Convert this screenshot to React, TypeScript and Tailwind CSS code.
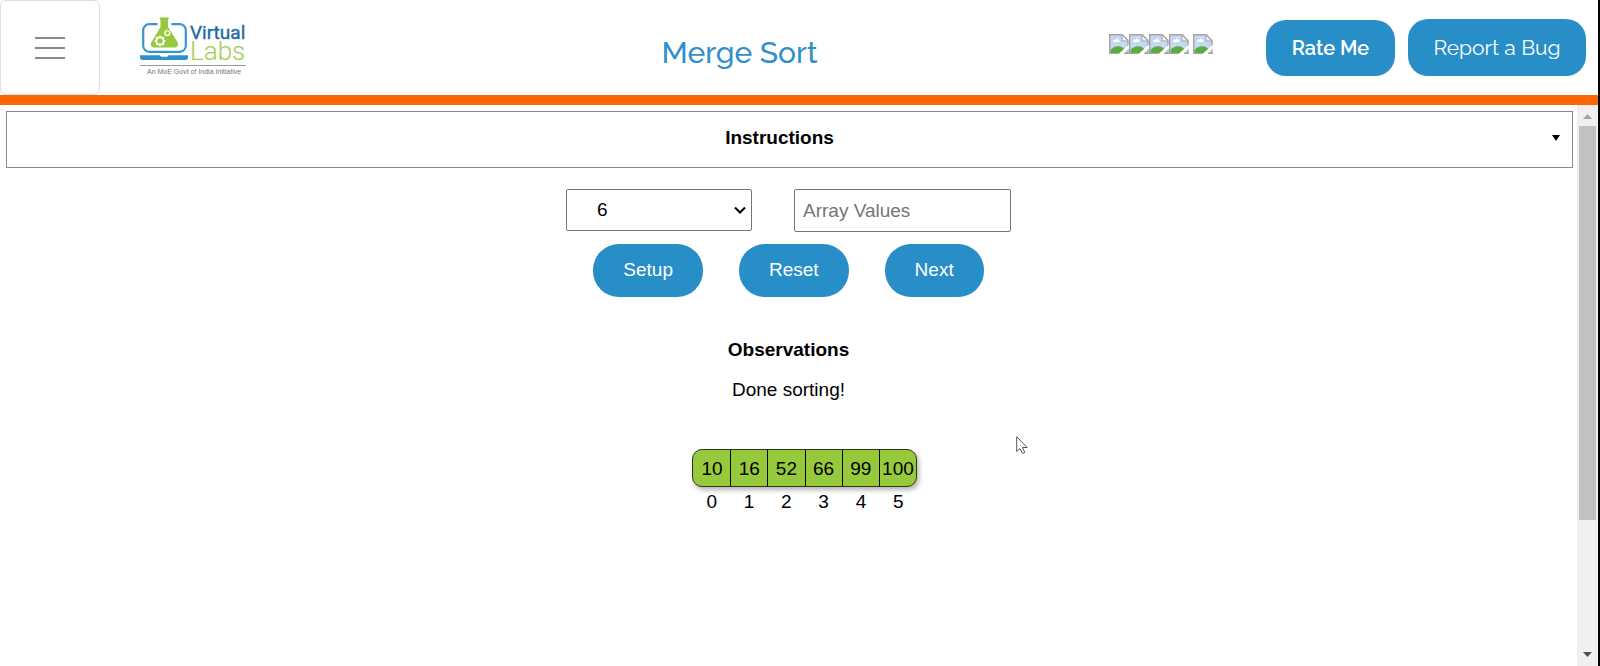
import React, { useState } from "react";

const values = [10, 16, 52, 66, 99, 100];
const sizes = [4, 5, 6, 7, 8];
const stars = [1, 2, 3, 4, 5];
const teeth = [0, 45, 90, 135, 180, 225, 270, 315];

function Gear({ x, y, r }: { x: number; y: number; r: number }) {
  return (
    <g transform={`translate(${x} ${y})`} stroke="#fff" fill="none">
      <circle r={r} strokeWidth={r * 0.5} />
      {teeth.map((a) => (
        <path key={a} d={`M0 ${-r * 1.1}V${-r * 1.5}`} strokeWidth={r * 0.4} transform={`rotate(${a})`} />
      ))}
    </g>
  );
}

function Logo() {
  return (
    <svg viewBox="0 0 108 60" className="h-[60px] w-[108px]" role="img" aria-label="Virtual Labs">
      <rect x="3.2" y="7.2" width="42.6" height="27.6" rx="6" fill="none" stroke="#3797cb" strokeWidth="2.2" />
      <path d="M17.500 4h14v8h-14z" fill="#fff" />
      <path
        d="M19.800 .5H28.700V2.500H28V10L37.500 25C39 28 37.500 30.500 34.500 30.500H14.500C11.500 30.500 10 28 11.500 25L20.500 10V2.500H19.800z"
        fill="#97c93d"
      />
      <Gear x={20} y={24} r={3.7} />
      <Gear x={27.3} y={16} r={2.3} />
      <path d="M0 38.200h20l1 1.600h6.500l1-1.600h19.500v2.300c0 1.600-1 2.500-2.500 2.500h-43c-1.500 0-2.500-.9-2.500-2.500z" fill="#3090cb" />
      <text x="50" y="22" fontSize="19" fill="#1f6ba3" stroke="#1f6ba3" strokeWidth="0.4" className="font-['Roboto',sans-serif]">
        Virtual
      </text>
      <text x="50" y="43" fontSize="26" fontWeight="300" fill="#a2cf52" className="font-['Roboto',sans-serif]">
        Labs
      </text>
      <path d="M0 48.500h106" stroke="#9a9a9a" />
      <text x="7" y="57" fontSize="7" fill="#777" className="font-['Liberation_Sans',sans-serif]">
        An MoE Govt of India Initiative
      </text>
    </svg>
  );
}

function MissingImage() {
  return (
    <svg viewBox="0 0 20 20" className="block size-5" aria-hidden="true">
      <path d="M1 1h12l6 6v12.500h-18z" fill="#c6d8f5" />
      <path d="M4 7.500c0-1.500 1.500-2 2.200-1.400C7 4 9.500 4.500 9.700 6.300c1.300 0 1.300 1.700 0 1.700h-4.700c-.6 0-1-.2-1-.5z" fill="#fff" />
      <path d="M1.500 19v-3c2-2.500 4.500-3.700 7.500-3.700 4 0 7 2.700 8.500 6.700z" fill="#5aac3c" />
      <path d="M.7 20V.700H13.200L19 6.500V20M0 19.400h20" fill="none" stroke="#a3a3a3" strokeWidth="1.400" />
      <path d="M13 1v6h6z" fill="#f4f4f4" stroke="#a3a3a3" />
      <path d="M9.500 20 20 10.500v4l-5.500 5.500z" fill="#fff" />
    </svg>
  );
}

function ActionButton({ label, onClick }: { label: string; onClick?: () => void }) {
  return (
    <button type="button" onClick={onClick} className="h-[53px] rounded-[26px] bg-[#288ec8] px-[30px] pb-0.5 text-[19px] text-white">
      {label}
    </button>
  );
}

export default function App() {
  const [size, setSize] = useState("6");
  const [text, setText] = useState("");

  return (
    <div className="flex min-h-screen flex-col border-r-2 border-black bg-white font-['Liberation_Sans',Arial,sans-serif] text-[19px] leading-6 text-black">
      <header className="flex h-[105px] items-start border-b-10 border-[#ff6600] font-['Raleway','Lato',sans-serif]">
        <button
          type="button"
          aria-label="Menu"
          className="flex h-[95px] w-[100px] flex-col items-center justify-center gap-2 rounded-md border border-[#dfdfdf]"
        >
          <span className="h-0.5 w-[30px] bg-[#888]" />
          <span className="h-0.5 w-[30px] bg-[#888]" />
          <span className="h-0.5 w-[30px] bg-[#888]" />
        </button>
        <a href="#home" className="mt-[17px] ml-10">
          <Logo />
        </a>
        <h1 className="mt-[33px] flex-1 pl-[122px] text-center text-[30px] leading-10 font-medium text-[#3090c7]">Merge Sort</h1>
        <div className="mt-[34px] flex" role="img" aria-label="Rating">
          {stars.map((s) => (
            <span key={s} className="last:ml-1">
              <MissingImage />
            </span>
          ))}
        </div>
        <button type="button" className="mt-5 ml-[53px] h-14 w-[129px] rounded-[20px] bg-[#288ec8] text-[20px] font-semibold text-white">
          Rate Me
        </button>
        <button type="button" className="mt-[19px] mr-3 ml-[13px] h-[57px] w-[178px] rounded-[20px] bg-[#288ec8] text-[21px] text-white">
          Report a Bug
        </button>
      </header>

      <div className="flex flex-1">
        <main className="flex flex-1 flex-col items-center">
          <button
            type="button"
            className="mt-1.5 mr-1 ml-1.5 flex h-[57px] items-center self-stretch border border-[#8a8a8a] pr-3 pb-[3px] font-bold"
          >
            <span className="flex-1">Instructions</span>
            <svg viewBox="0 0 8 6" className="h-1.5 w-2" aria-hidden="true">
              <path d="M0 0h8L4 6z" />
            </svg>
          </button>

          <div className="mt-[21px] flex items-start gap-[42px]">
            <div className="relative">
              <select
                aria-label="Array size"
                value={size}
                onChange={(e) => setSize(e.target.value)}
                className="h-[42px] w-[186px] appearance-none rounded-xs border border-[#767676] bg-white pl-[30px]"
              >
                {sizes.map((n) => (
                  <option key={n}>{n}</option>
                ))}
              </select>
              <svg viewBox="0 0 12 8" className="pointer-events-none absolute top-[17px] right-1.5 h-2 w-3" aria-hidden="true">
                <path d="M1 1.500 6 6.500 11 1.500" fill="none" stroke="#000" strokeWidth="2" />
              </svg>
            </div>
            <input
              type="text"
              aria-label="Array Values"
              placeholder="Array Values"
              value={text}
              onChange={(e) => setText(e.target.value)}
              className="h-[43px] w-[217px] rounded-xs border border-[#767676] px-2 placeholder:text-[#757575]"
            />
          </div>

          <div className="mt-3 flex gap-9">
            <ActionButton label="Setup" />
            <ActionButton label="Reset" onClick={() => setText("")} />
            <ActionButton label="Next" />
          </div>

          <h2 className="mt-[41px] font-bold">Observations</h2>
          <p className="mt-4">Done sorting!</p>

          <div className="mt-[47px] ml-8 w-[225px]">
            <ol className="grid h-[38px] grid-cols-6 overflow-hidden rounded-[10px] border border-[#2b3a12] bg-[#97c93d] shadow-[2px_3px_5px_rgba(0,0,0,0.3)]">
              {values.map((v) => (
                <li key={v} className="flex items-center justify-center border-l border-black pt-px first:border-transparent">
                  {v}
                </li>
              ))}
            </ol>
            <ol className="mt-[3px] grid grid-cols-6 pl-px text-center">
              {values.map((v, i) => (
                <li key={v}>{i}</li>
              ))}
            </ol>
          </div>
        </main>

        <div className="flex w-[21px] flex-col items-center bg-[#f0f0f0]" aria-hidden="true">
          <svg viewBox="0 0 9 5" className="mt-[9px] h-[5px] w-[9px]">
            <path d="M4.500 0 9 5h-9z" fill="#a3a3a3" />
          </svg>
          <div className="mt-[7px] h-[394px] w-[17px] bg-[#c1c1c1]" />
          <svg viewBox="0 0 9 5" className="mt-auto mb-[9px] h-[5px] w-[9px]">
            <path d="M0 0h9L4.500 5z" fill="#505050" />
          </svg>
        </div>
      </div>

      <svg viewBox="0 0 13 20" className="pointer-events-none absolute top-[436px] left-[1016px] h-5 w-[13px]" aria-hidden="true">
        <path d="M.7.700V15.500L4 12.500l2.500 5 2.300-1.100-2.300-4.900h4.700z" fill="#fff" stroke="#445" strokeWidth="0.900" />
      </svg>
    </div>
  );
}
